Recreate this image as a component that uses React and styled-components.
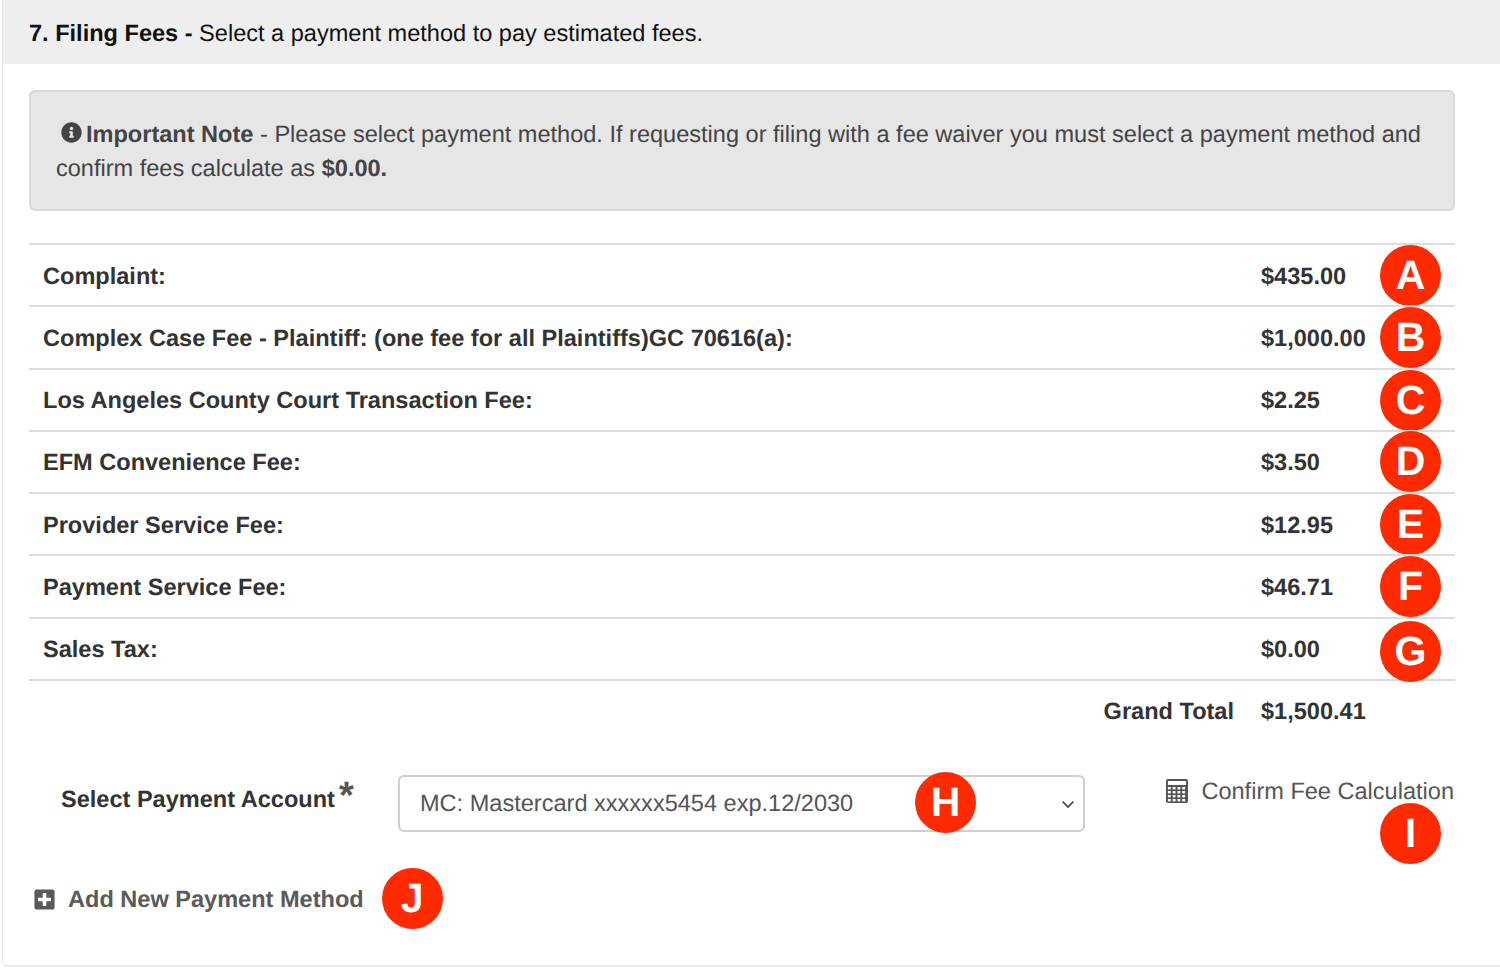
import React from 'react'
import styled, { createGlobalStyle } from 'styled-components'
import { FaInfoCircle, FaPlusSquare } from 'react-icons/fa'

const fees = [
  { label: 'Complaint:', amount: '$435.00', badge: 'A', shift: 0 },
  { label: 'Complex Case Fee - Plaintiff: (one fee for all Plaintiffs)GC 70616(a):', amount: '$1,000.00', badge: 'B', shift: 0 },
  { label: 'Los Angeles County Court Transaction Fee:', amount: '$2.25', badge: 'C', shift: 0 },
  { label: 'EFM Convenience Fee:', amount: '$3.50', badge: 'D', shift: -1 },
  { label: 'Provider Service Fee:', amount: '$12.95', badge: 'E', shift: 0 },
  { label: 'Payment Service Fee:', amount: '$46.71', badge: 'F', shift: 0 },
  { label: 'Sales Tax:', amount: '$0.00', badge: 'G', shift: 2 },
]

const CalculatorIcon = () => (
  <svg width="22" height="24" viewBox="0 0 23 24" preserveAspectRatio="none">
    <path fill="#555" fillRule="evenodd" d="M2 0h19a2 2 0 0 1 2 2v20a2 2 0 0 1-2 2H2a2 2 0 0 1-2-2V2a2 2 0 0 1 2-2zM2 2v4h19V2z" />
    <g fill="#fff">
      {[8, 12, 16, 20].map(y => [2, 7, 12, 17].map(x => (
        <rect key={`${x}-${y}`} x={x} y={y} width="3" height="2.4" />
      )))}
    </g>
  </svg>
)

export default function App() {
  return (
    <>
      <GlobalStyle />
      <Card>
        <CardHeader>
          <strong>7. Filing Fees - </strong>Select a payment method to pay estimated fees.
        </CardHeader>
        <CardBody>
          <Note>
            <NoteIcon><FaInfoCircle /></NoteIcon>
            <strong>Important Note</strong> - Please select payment method. If requesting or filing with a fee waiver you must select a payment method and confirm fees calculate as <strong>$0.00.</strong>
          </Note>
          <FeeTable>
            {fees.map(fee => (
              <FeeRow key={fee.badge}>
                <span>{fee.label}</span>
                <span>{fee.amount}</span>
                <RowBadge $shift={fee.shift}>{fee.badge}</RowBadge>
              </FeeRow>
            ))}
            <TotalRow>
              <span>Grand Total</span>
              <span>$1,500.41</span>
            </TotalRow>
          </FeeTable>
          <PaymentRow>
            <PaymentLabel>Select Payment Account<Required>*</Required></PaymentLabel>
            <SelectWrap>
              <AccountSelect defaultValue="mc">
                <option value="mc">MC: Mastercard xxxxxx5454 exp.12/2030</option>
              </AccountSelect>
              <Chevron width="14" height="9" viewBox="0 0 14 9">
                <path d="M1.5 1.5 7 7l5.5-5.5" fill="none" stroke="#444" strokeWidth="1.7" />
              </Chevron>
              <SelectBadge>H</SelectBadge>
            </SelectWrap>
            <ConfirmLink>
              <CalculatorIcon />
              Confirm Fee Calculation
              <ConfirmBadge>I</ConfirmBadge>
            </ConfirmLink>
          </PaymentRow>
          <AddRow>
            <AddIcon><FaPlusSquare /></AddIcon>
            <AddLabel>Add New Payment Method</AddLabel>
            <Badge>J</Badge>
          </AddRow>
        </CardBody>
      </Card>
    </>
  )
}

const GlobalStyle = createGlobalStyle`
  html, body {
    margin: 0;
    height: 971px;
    overflow: hidden;
    background: #fff;
    font-family: "Liberation Sans", Arial, sans-serif;
    text-rendering: geometricPrecision;
  }
`

const Card = styled.div`
  margin-left: 2px;
  width: 1510px;
  height: 967px;
  border-left: 1px solid #e6e6e6;
  border-bottom: 2px solid #ececec;
  border-radius: 0 0 0 6px;
  box-sizing: border-box;
`

const CardHeader = styled.div`
  height: 64px;
  box-sizing: border-box;
  padding: 20px 0 0 26px;
  background: #eeeeee;
  color: #111;
  font-size: 23.55px;
  line-height: 27px;
`

const CardBody = styled.div`
  width: 1426px;
  margin-left: 26px;
  padding-top: 26px;
`

const Note = styled.div`
  height: 121px;
  box-sizing: border-box;
  padding: 26px 20px 0 25px;
  background: #e6e6e6;
  border: 2px solid #d9d9d9;
  border-radius: 6px;
  color: #444;
  font-size: 23.55px;
  line-height: 33.5px;
`

const NoteIcon = styled.span`
  display: inline-block;
  margin: 0 4px 0 5px;
  font-size: 21px;
  line-height: 1;
  vertical-align: -1px;
`

const FeeTable = styled.div`
  margin-top: 32px;
  color: #333;
  font-size: 23.55px;
  font-weight: bold;
`

const FeeRow = styled.div`
  position: relative;
  display: grid;
  grid-template-columns: 1fr 194px;
  align-items: center;
  height: 62.25px;
  box-sizing: border-box;
  padding: 2px 0 0 14px;
  border-top: 2px solid #dcdcdc;
  &:nth-child(7) {
    border-bottom: 2px solid #dcdcdc;
    height: 64px;
  }
`

const TotalRow = styled.div`
  display: grid;
  grid-template-columns: 1fr 194px;
  height: 60px;
  padding-top: 17px;
  box-sizing: border-box;
  span:first-child {
    justify-self: end;
    padding-right: 27px;
  }
`

const Badge = styled.span`
  display: inline-flex;
  align-items: center;
  justify-content: center;
  width: 61px;
  height: 61px;
  border-radius: 50%;
  background: #ff2a00;
  color: #fff;
  font-size: 41px;
  font-weight: bold;
  line-height: 1;
`

const RowBadge = styled(Badge)`
  position: absolute;
  right: 14px;
  top: ${p => p.$shift}px;
`

const PaymentRow = styled.div`
  display: grid;
  grid-template-columns: 369px 687px 1fr;
  align-items: start;
  margin-top: 35px;
`

const PaymentLabel = styled.div`
  padding: 10px 0 0 32px;
  color: #333;
  font-size: 23.55px;
  font-weight: bold;
  line-height: 27px;
  white-space: nowrap;
`

const Required = styled.span`
  margin-left: 4px;
  color: #555;
  font-size: 38px;
  line-height: 0;
  vertical-align: -1px;
`

const SelectWrap = styled.div`
  position: relative;
  margin-top: -1px;
`

const AccountSelect = styled.select`
  display: block;
  width: 100%;
  height: 57px;
  padding: 0 20px;
  appearance: none;
  background: #fff;
  border: 2px solid #cfcfcf;
  border-radius: 6px;
  color: #555;
  font-family: "Liberation Sans", Arial, sans-serif;
  font-size: 23.55px;
  text-rendering: geometricPrecision;
`

const Chevron = styled.svg`
  position: absolute;
  right: 10px;
  top: 25px;
`

const SelectBadge = styled(Badge)`
  position: absolute;
  left: 517px;
  top: -3px;
`

const ConfirmLink = styled.div`
  position: relative;
  display: flex;
  align-items: center;
  justify-content: flex-end;
  gap: 13px;
  margin-top: 2px;
  padding-right: 1px;
  color: #555;
  font-size: 23.55px;
  line-height: 27px;
  white-space: nowrap;
`

const ConfirmBadge = styled(Badge)`
  position: absolute;
  right: 14px;
  top: 25px;
`

const AddRow = styled.div`
  display: flex;
  align-items: center;
  height: 62px;
  margin-top: 36px;
  padding-left: 4px;
  color: #5a5a5a;
  font-size: 23.55px;
  font-weight: bold;
  & > ${Badge} {
    margin-left: 18px;
  }
`

const AddIcon = styled.span`
  display: inline-flex;
  margin: 1px 12px 0 0;
  font-size: 23px;
`

const AddLabel = styled.span`
  margin-top: 2px;
`
